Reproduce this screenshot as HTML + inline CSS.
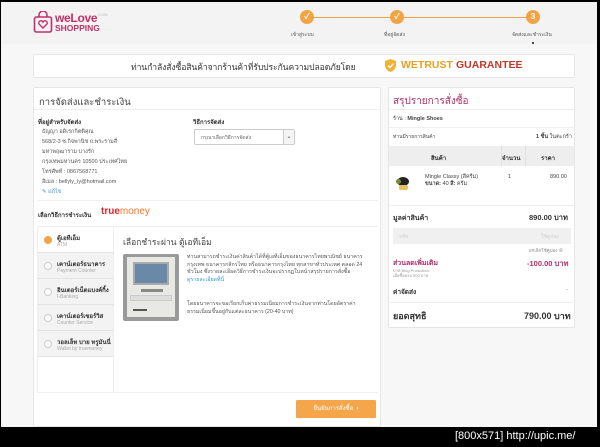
<!DOCTYPE html>
<html><head><meta charset="utf-8"><style>
*{margin:0;padding:0;box-sizing:border-box}
body{width:600px;height:447px;background:#000;position:relative;overflow:hidden;font-family:"Liberation Sans","Noto Sans CJK SC",sans-serif;font-size:6px;color:#444}
.a{position:absolute;white-space:nowrap}
#page{position:absolute;left:1px;top:2px;width:596px;height:425px;background:#f7f7f7;overflow:hidden}
.box{position:absolute;background:#fff;border:1px solid #e6e6e6;border-radius:2px}
.b{font-weight:bold;color:#333}
.c{position:absolute;width:14px;height:14px;border-radius:50%;background:#f2a444;color:#fff;font-size:8px;text-align:center;line-height:14px;font-weight:bold}
.hr{position:absolute;height:1px;background:#eee}
.tab{position:absolute;left:0;width:75px;height:26px;background:#f3f3f3;border-bottom:1px solid #e4e4e4}
.tab .r{position:absolute;left:6px;top:9px;width:8px;height:8px;border-radius:50%;border:1px solid #ccc;background:#fff}
.tab .t{position:absolute;left:19px;top:6px;font-weight:bold;font-size:6px;color:#333}
.tab .s{position:absolute;left:19px;top:15px;font-size:5px;color:#aaa}
</style></head><body>
<div id="page">
<div class="a" style="left:0;top:0;width:596px;height:42px;background:#f3f3f3"></div>
<svg class="a" style="left:32px;top:9px" width="20" height="22" viewBox="0 0 20 22"><path d="M6 6V4a4 4 0 0 1 8 0v2" fill="none" stroke="#c2306a" stroke-width="1.6"/><rect x="1.5" y="6" width="17" height="15" rx="2" fill="none" stroke="#c2306a" stroke-width="1.6"/><path d="M10 17l-4-4a2.2 2.2 0 0 1 4-2a2.2 2.2 0 0 1 4 2z" fill="none" stroke="#c2306a" stroke-width="1.4"/></svg>
<div class="a" style="left:54px;top:9px;font-size:12px;font-weight:bold;color:#c2306a;letter-spacing:-0.3px">weLove</div>
<div class="a" style="left:54px;top:21px;font-size:8.5px;font-weight:bold;color:#c2306a">SHOPPING</div>
<div class="a" style="left:96px;top:10px;font-size:4px;color:#bbb;width:4px;line-height:5px;white-space:normal">.COM</div>
<div class="a" style="left:312px;top:15px;width:220px;height:1px;background:#f2a444"></div>
<div class="c" style="left:299px;top:8px">✓</div>
<div class="c" style="left:389px;top:8px">✓</div>
<div class="c" style="left:525px;top:8px">3</div>
<div class="a" style="left:290px;top:29px;font-size:5px;color:#555">เข้าสู่ระบบ</div>
<div class="a" style="left:383px;top:29px;font-size:5px;color:#555">ที่อยู่จัดส่ง</div>
<div class="a" style="left:511px;top:29px;font-size:5px;color:#555">จัดส่งและชำระเงิน</div>
<div class="a" style="left:531px;top:40px;width:2px;height:2px;background:#444"></div>
<div class="box" style="left:32px;top:52px;width:542px;height:24px"></div>
<div class="a" style="left:130px;top:58px;font-size:8.6px;color:#333;letter-spacing:-0.1px">ท่านกำลังสั่งซื้อสินค้าจากร้านค้าที่รับประกันความปลอดภัยโดย</div>
<svg class="a" style="left:384px;top:57px" width="11" height="13" viewBox="0 0 11 13"><path d="M5.5 0L11 2v4c0 3.5-2.5 6-5.5 7C2.5 12 0 9.5 0 6V2z" fill="#f2b233"/><path d="M3 6.5l2 2 3.5-4" stroke="#fff" stroke-width="1.3" fill="none"/></svg>
<div class="a" style="left:400px;top:57px;font-size:10.5px;font-weight:bold;color:#e8a020">WETRUST</div>
<div class="a" style="left:455px;top:57px;font-size:10.5px;font-weight:bold;color:#c0392b">GUARANTEE</div>
<div class="box" style="left:32px;top:85px;width:348px;height:340px"></div>
<div class="a" style="left:38px;top:93px;font-size:9.5px;color:#444">การจัดส่งและชำระเงิน</div>
<div class="hr" style="left:33px;top:107px;width:346px"></div>
<div class="a b" style="left:37px;top:115px">ที่อยู่สำหรับจัดส่ง</div>
<div class="a" style="left:41px;top:125px;line-height:10px;font-size:5.5px;color:#555">ธัญญา อดิเรกกิตติคุณ<br>568/2-3 ซ.กิจพานิช ถ.พระรามสี่<br>มหาพฤฒาราม บางรัก<br>กรุงเทพมหานคร 10500 ประเทศไทย<br>โทรศัพท์ : 0867568771<br>อีเมล : bellyly_ly@hotmail.com<br><span style="color:#3a9ad9">✎ แก้ไข</span></div>
<div class="a b" style="left:192px;top:115px">วิธีการจัดส่ง</div>
<div class="a" style="left:193px;top:127px;width:101px;height:16px;border:1px solid #ccc;background:#fff;border-radius:2px"></div>
<div class="a" style="left:200px;top:132px;font-size:5px;color:#666">กรุณาเลือกวิธีการจัดส่ง</div>
<div class="a" style="left:282px;top:128px;width:11px;height:14px;border-left:1px solid #ccc;background:#f4f4f4;font-size:6px;text-align:center;line-height:14px">⌄</div>
<div class="hr" style="left:37px;top:198px;width:340px"></div>
<div class="a b" style="left:37px;top:208px">เลือกวิธีการชำระเงิน</div>
<div class="a" style="left:100px;top:204px;font-size:10px;font-weight:bold;color:#e0262a">true<span style="font-weight:normal;color:#f07a2a">money</span></div>
<div class="a" style="left:36px;top:224px;width:341px;height:167px;border:1px solid #eee;background:#fff">
 <div class="a" style="left:0;top:0;width:75px;height:130px;background:#f3f3f3"></div>
 <div class="tab" style="top:0;background:#fff"><div class="r" style="background:#f2a444;border-color:#f2a444"></div><div class="t">ตู้เอทีเอ็ม</div><div class="s">ATM</div></div>
 <div class="tab" style="top:26px"><div class="r"></div><div class="t">เคาน์เตอร์ธนาคาร</div><div class="s">Payment Counter</div></div>
 <div class="tab" style="top:52px"><div class="r"></div><div class="t">อินเตอร์เน็ตแบงค์กิ้ง</div><div class="s">I-Banking</div></div>
 <div class="tab" style="top:78px"><div class="r"></div><div class="t">เคาน์เตอร์เซอร์วิส</div><div class="s">Counter Service</div></div>
 <div class="tab" style="top:104px"><div class="r"></div><div class="t">วอลเล็ท บาย ทรูมันนี่</div><div class="s">Wallet by truemoney</div></div>
 <div class="a" style="left:75px;top:0;width:265px;height:166px;border-left:1px solid #eee;border-bottom:1px solid #eee;background:#fff"></div>
 <div class="a" style="left:85px;top:8px;font-size:8.5px;color:#444">เลือกชำระผ่าน ตู้เอทีเอ็ม</div>
 <div class="a" style="left:85px;top:27px;width:56px;height:67px;background:#9a9a9a;border-radius:2px"></div>
 <div class="a" style="left:89px;top:30px;width:48px;height:60px;background:#e8e8e4"></div>
 <div class="a" style="left:95px;top:35px;width:36px;height:23px;background:#6a88a8;border:2px solid #aaa"></div>
 <div class="a" style="left:103px;top:62px;width:22px;height:3px;background:#888"></div>
 <div class="a" style="left:92px;top:68px;width:42px;height:6px;background:#ddd;border:1px solid #ccc"></div>
 <div class="a" style="left:95px;top:82px;width:14px;height:2px;background:#555"></div>
 <div class="a" style="left:149px;top:27px;font-size:5.3px;color:#555;line-height:7.5px;white-space:normal;width:182px">ท่านสามารถชำระเงินค่าสินค้าได้ที่ตู้เอทีเอ็มของธนาคารไทยพาณิชย์ ธนาคารกรุงเทพ ธนาคารกสิกรไทย หรือธนาคารกรุงไทย ทุกสาขาทั่วประเทศ ตลอด 24 ชั่วโมง ซึ่งรายละเอียดวิธีการชำระเงินจะปรากฏในหน้าสรุปรายการสั่งซื้อ<br><span style="color:#3a9ad9">ดูรายละเอียดที่นี่</span></div>
 <div class="a" style="left:149px;top:74px;font-size:5.3px;color:#555;line-height:7.5px;white-space:normal;width:182px">โดยธนาคารจะขอเรียกเก็บค่าธรรมเนียมการชำระเงินจากท่านโดยอัตราค่าธรรมเนียมขึ้นอยู่กับแต่ละธนาคาร (20-40 บาท)</div>
</div>
<div class="a" style="left:295px;top:398px;width:80px;height:18px;background:#f5a64a;border-radius:1px;color:#fff;font-size:6px;text-align:center;line-height:18px">ยืนยันการสั่งซื้อ &nbsp;<b>›</b></div>
<div class="box" style="left:387px;top:85px;width:187px;height:241px"></div>
<div class="a" style="left:392px;top:92px;font-size:10px;color:#b0306a">สรุปรายการสั่งซื้อ</div>
<div class="hr" style="left:388px;top:107px;width:185px"></div>
<div class="a" style="left:392px;top:113px;font-size:5.5px">ร้าน : <b>Mingle Shoes</b></div>
<div class="hr" style="left:388px;top:125px;width:185px"></div>
<div class="a" style="left:392px;top:131px;font-size:5px">ท่านมีรายการสินค้า</div>
<div class="a" style="left:535px;top:131px;font-size:5.5px"><b>1 ชิ้น</b> ในตะกร้า</div>
<div class="a" style="left:388px;top:144px;width:185px;height:20px;background:#eee"></div>
<div class="a" style="left:500px;top:144px;width:1px;height:20px;background:#e0e0e0"></div>
<div class="a" style="left:524px;top:144px;width:1px;height:20px;background:#e0e0e0"></div>
<div class="a b" style="left:430px;top:151px">สินค้า</div>
<div class="a b" style="left:501px;top:151px">จำนวน</div>
<div class="a b" style="left:540px;top:151px">ราคา</div>
<div class="a" style="left:396px;top:175px;width:12px;height:9px;border-radius:50%;background:#222"></div>
<div class="a" style="left:398px;top:183px;width:9px;height:5px;background:#e8c060;border-radius:2px"></div>
<div class="a" style="left:395px;top:177px;width:5px;height:5px;border-radius:50%;background:#7a8a30"></div>
<div class="a" style="left:424px;top:172px;font-size:5.5px;line-height:7px">Mingle Classy (สีครีม)<br><b>ขนาด:</b> 40 <b>สี:</b> ครีม</div>
<div class="a" style="left:507px;top:172px;font-size:5.5px">1</div>
<div class="a" style="left:549px;top:172px;font-size:5.5px">890.00</div>
<div class="hr" style="left:388px;top:203px;width:185px"></div>
<div class="a b" style="left:392px;top:211px;font-size:7px">มูลค่าสินค้า</div>
<div class="a b" style="left:528px;top:210px;font-size:7.5px">890.00 บาท</div>
<div class="a" style="left:392px;top:226px;width:178px;height:16px;background:#f0f0f0"></div>
<div class="a" style="left:398px;top:231px;font-size:5px;color:#ccc">รหัส</div>
<div class="a" style="left:540px;top:231px;font-size:5px;color:#ccc">ใช้คูปอง</div>
<div class="a" style="left:528px;top:245px;font-size:4.5px;color:#888">ยกเลิกใช้คูปอง ⊗</div>
<div class="a b" style="left:392px;top:256px;font-size:7px;color:#b0306a">ส่วนลดเพิ่มเติม</div>
<div class="a b" style="left:526px;top:256px;font-size:7.5px;color:#b0306a">-100.00 บาท</div>
<div class="a" style="left:392px;top:266px;font-size:4px;color:#999;line-height:5px">บาท Blog Promotion<br>เมื่อซื้อครบ 500 บาท</div>
<div class="a b" style="left:392px;top:285px;font-size:6.5px">ค่าจัดส่ง</div>
<div class="a" style="left:565px;top:285px;font-size:6px;color:#999">-</div>
<div class="hr" style="left:388px;top:300px;width:185px"></div>
<div class="a b" style="left:392px;top:307px;font-size:9px">ยอดสุทธิ</div>
<div class="a b" style="left:523px;top:307px;font-size:9px">790.00 บาท</div>
</div>
<div class="a" style="left:455px;top:430px;font-size:11px;color:#fff;font-family:'Liberation Sans',sans-serif">[800x571] http://upic.me/</div>
</body></html>
